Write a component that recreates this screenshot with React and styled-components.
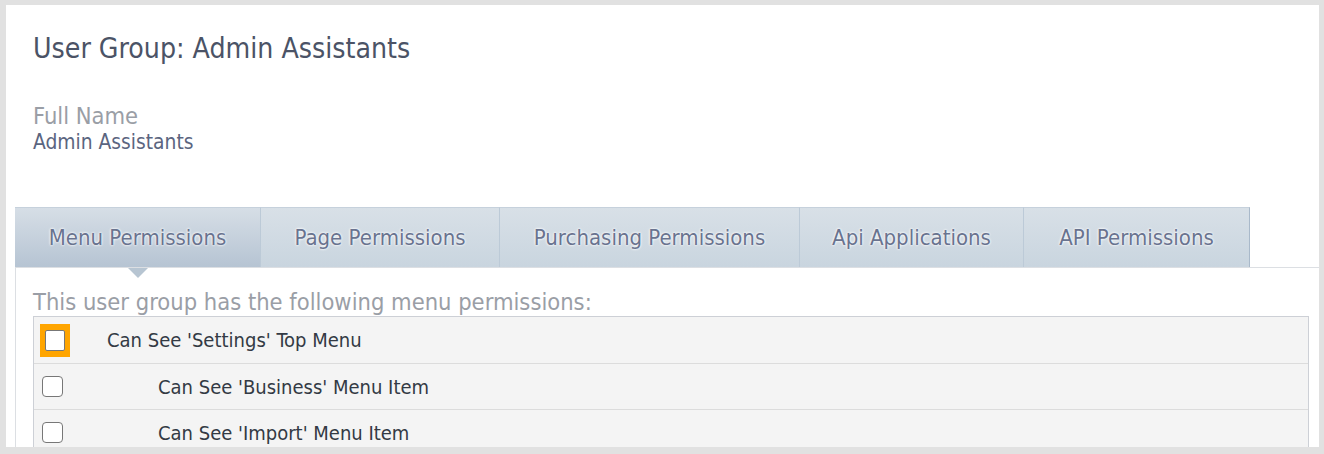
import React from "react";
import styled, { createGlobalStyle } from "styled-components";

const Global = createGlobalStyle`
  html, body { margin: 0; padding: 0; }
  body {
    background: #e1e1e1;
    font-family: "DejaVu Sans Condensed", "DejaVu Sans", sans-serif;
    overflow: hidden;
  }
`;

const Panel = styled.div`
  margin: 5px 5px 0 6px;
  height: 442px;
  background: #ffffff;
  overflow: hidden;
  padding-left: 9px;
  box-sizing: border-box;
`;

const Header = styled.div`
  padding: 27px 18px 0 18px;
`;

const Title = styled.h1`
  margin: 0;
  font-weight: normal;
  font-size: 28.2px;
  line-height: 34px;
  color: #4b5366;
`;

const FieldLabel = styled.div`
  margin-top: 36px;
  font-size: 23.5px;
  line-height: 28px;
  color: #9a9ea6;
`;

const FieldValue = styled.div`
  font-size: 20.8px;
  line-height: 24px;
  color: #5b6580;
`;

const TabBar = styled.div`
  margin-top: 53px;
  display: flex;
  border-bottom: 1px solid #dcdfe3;
`;

const Tab = styled.div`
  position: relative;
  width: ${(p) => p.w}px;
  height: 60px;
  box-sizing: border-box;
  display: flex;
  align-items: center;
  justify-content: center;
  font-size: 22px;
  color: #69738f;
  text-shadow: 0 0 3px #ffffff, 0 0 2px #ffffff;
  border-top: 1px solid #c6d1dc;
  border-right: 1px solid ${(p) => (p.last ? "#a9b9ca" : "#bccad7")};
  background: ${(p) =>
    p.active
      ? "linear-gradient(#d6dee6, #b6c4d3)"
      : "linear-gradient(#d8e0e7, #c9d5df)"};

  ${(p) =>
    p.active &&
    `
    &::after {
      content: "";
      position: absolute;
      left: 50%;
      bottom: -11px;
      margin-left: -10px;
      border-left: 10px solid transparent;
      border-right: 10px solid transparent;
      border-top: 10px solid #b7c5d2;
    }
  `}
`;

const Content = styled.div`
  border-left: 1px solid #dcdfe3;
  padding: 20px 10px 0 17px;
`;

const Intro = styled.div`
  font-size: 23.5px;
  line-height: 28px;
  color: #9a9ea6;
`;

const Table = styled.div`
  border: 1px solid #cdd0d6;
  border-bottom: none;
  background: #f4f4f4;
`;

const Row = styled.div`
  height: 46px;
  display: flex;
  align-items: center;
  border-top: ${(p) => (p.first ? "none" : "1px solid #dcdcdc")};
  box-sizing: border-box;
`;

const CheckCell = styled.div`
  width: 40px;
  padding-left: ${(p) => (p.focus ? 6 : 8)}px;
  box-sizing: border-box;
  display: flex;
  align-items: center;
`;

const FocusRing = styled.span`
  display: inline-flex;
  padding: 6px 5px 6px 5px;
  background: #ffa500;
`;

const Check = styled.span`
  display: inline-block;
  width: ${(p) => (p.small ? 20 : 21)}px;
  height: 21px;
  box-sizing: border-box;
  border: 1px solid #777777;
  border-radius: ${(p) => (p.small ? 2 : 4)}px;
  background: #ffffff;
`;

const Label = styled.div`
  font-size: 20px;
  color: #333a44;
  padding-left: ${(p) => p.indent}px;
`;

const tabs = [
  { label: "Menu Permissions", w: 246, active: true },
  { label: "Page Permissions", w: 239 },
  { label: "Purchasing Permissions", w: 300 },
  { label: "Api Applications", w: 224 },
  { label: "API Permissions", w: 226, last: true },
];

const rows = [
  { label: "Can See 'Settings' Top Menu", indent: 33, focus: true },
  { label: "Can See 'Business' Menu Item", indent: 84 },
  { label: "Can See 'Import' Menu Item", indent: 84 },
];

export default function App() {
  return (
    <>
      <Global />
      <Panel>
        <Header>
          <Title>User Group: Admin Assistants</Title>
          <FieldLabel>Full Name</FieldLabel>
          <FieldValue>Admin Assistants</FieldValue>
        </Header>
        <TabBar>
          {tabs.map((t) => (
            <Tab key={t.label} w={t.w} active={t.active} last={t.last}>
              {t.label}
            </Tab>
          ))}
        </TabBar>
        <Content>
          <Intro>This user group has the following menu permissions:</Intro>
          <Table>
            {rows.map((r, i) => (
              <Row key={r.label} first={i === 0}>
                <CheckCell focus={r.focus}>
                  {r.focus ? (
                    <FocusRing>
                      <Check small />
                    </FocusRing>
                  ) : (
                    <Check />
                  )}
                </CheckCell>
                <Label indent={r.indent}>{r.label}</Label>
              </Row>
            ))}
          </Table>
        </Content>
      </Panel>
    </>
  );
}
